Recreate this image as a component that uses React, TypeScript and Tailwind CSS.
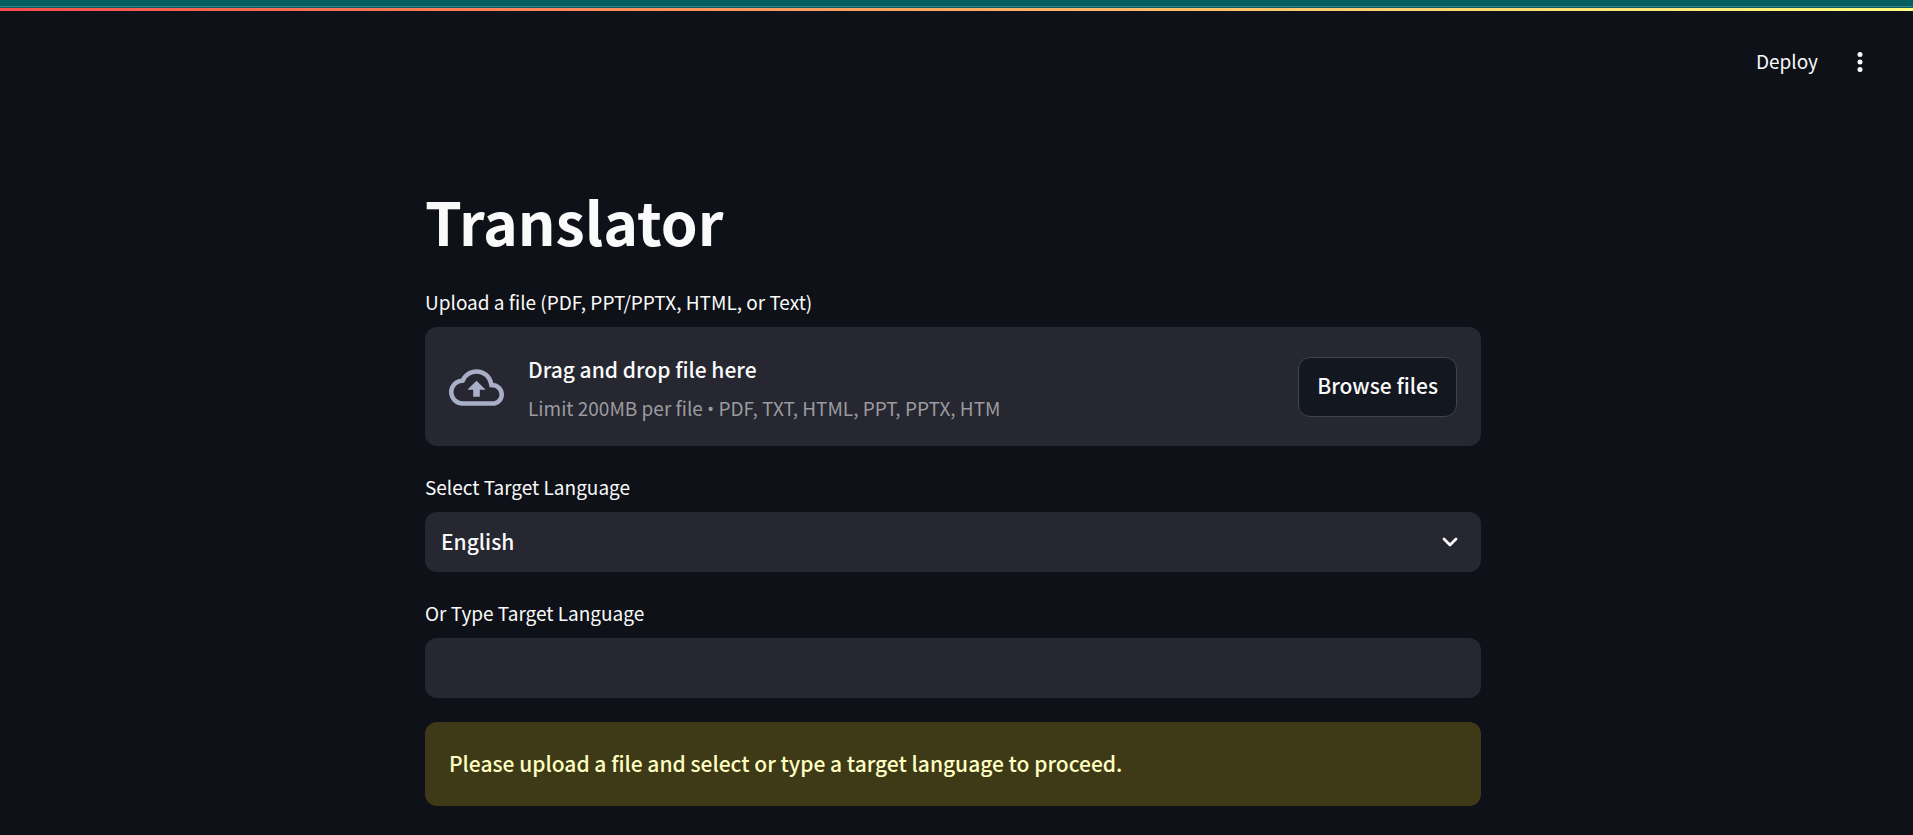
import { useRef, useState } from "react";

const languages = ["English", "Spanish", "French", "German", "Hindi"];

const labelClass = "mb-1.5 flex h-9 items-center pb-0.5 text-[19px] leading-8";
const fieldClass =
  "h-15 w-full appearance-none rounded-xl bg-[#262730] px-4 pb-0.5 text-[21px] leading-9 font-medium outline-none focus-visible:ring-2 focus-visible:ring-[#ff4b4b]";

function Header() {
  return (
    <header>
      <div className="h-2 bg-[#045d61] pt-1.5">
        <div className="h-px bg-[#3c7f83]" />
      </div>
      <div className="h-[3px] bg-linear-to-r from-[#ff4b4b] to-[#fffd80]" />
      <div className="flex h-[102px] items-center justify-end gap-[27px] pr-[38px]">
        <button type="button" className="pb-0.5 text-[19px] leading-9">
          Deploy
        </button>
        <button type="button" aria-label="Main menu">
          <svg viewBox="0 0 24 24" className="size-[30px]" fill="currentColor" aria-hidden="true">
            <circle cx="12" cy="6" r="2" />
            <circle cx="12" cy="12" r="2" />
            <circle cx="12" cy="18" r="2" />
          </svg>
        </button>
      </div>
    </header>
  );
}

function FileUpload() {
  const picker = useRef<HTMLInputElement>(null);
  return (
    <div>
      <label htmlFor="file" className={labelClass}>
        Upload a file (PDF, PPT/PPTX, HTML, or Text)
      </label>
      <section className="flex items-center rounded-xl bg-[#262730] px-6 pt-[23px] pb-[22px]">
        <svg viewBox="0 0 24 24" className="mr-6 size-[55px] shrink-0 text-[#a9afc6]" fill="currentColor" aria-hidden="true">
          <path d="M19.35 10.04A7.49 7.49 0 0012 4C9.11 4 6.6 5.64 5.35 8.04A5.994 5.994 0 000 14c0 3.31 2.69 6 6 6h13c2.76 0 5-2.24 5-5 0-2.64-2.05-4.78-4.65-4.96zM19 18H6c-2.21 0-4-1.79-4-4 0-2.05 1.53-3.76 3.56-3.97l1.07-.11.5-.95A5.469 5.469 0 0112 6c2.62 0 4.88 1.86 5.39 4.43l.3 1.5 1.53.11A2.98 2.98 0 0122 15c0 1.65-1.35 3-3 3zM8 13h2.55v3h2.9v-3H16l-4-4z" />
        </svg>
        <div className="flex grow flex-col gap-[3px]">
          <p className="text-[21px] leading-[39px] font-medium">Drag and drop file here</p>
          <p className="text-[19px] leading-8 text-[#9b9b9f]">
            Limit 200MB per file <span className="font-['Open_Sans',sans-serif] leading-none">•</span> PDF, TXT, HTML, PPT, PPTX, HTM
          </p>
        </div>
        <input
          ref={picker}
          id="file"
          type="file"
          accept=".pdf,.txt,.html,.ppt,.pptx,.htm"
          className="hidden"
        />
        <button
          type="button"
          onClick={() => picker.current?.click()}
          className="h-15 rounded-xl border border-[#41434b] bg-[#131720] px-[18px] pb-1 text-[21px] leading-9 font-medium"
        >
          Browse files
        </button>
      </section>
    </div>
  );
}

export default function App() {
  const [language, setLanguage] = useState("English");
  const [typed, setTyped] = useState("");

  return (
    <div className="min-h-screen bg-[#0e1117] font-['Source_Sans_Pro','Noto_Sans_CJK_SC',sans-serif] text-[#fafafa]">
      <Header />
      <main className="pr-[7px]">
        <div className="mx-auto flex max-w-[1056px] flex-col gap-6 pt-[69px] pb-6">
          <h1 className="pb-0.5 text-[59px] leading-[77px] font-bold">Translator</h1>
          <FileUpload />
          <div>
            <label htmlFor="language" className={labelClass}>
              Select Target Language
            </label>
            <div className="relative">
              <select
                id="language"
                value={language}
                onChange={(event) => setLanguage(event.target.value)}
                className={fieldClass}
              >
                {languages.map((name) => (
                  <option key={name}>{name}</option>
                ))}
              </select>
              <svg
                viewBox="0 0 30 30"
                className="pointer-events-none absolute inset-y-0 right-4 my-auto size-[30px]"
                fill="none"
                stroke="currentColor"
                strokeWidth="2.8"
                strokeLinecap="round"
                strokeLinejoin="round"
                aria-hidden="true"
              >
                <path d="M9 12l6 6 6-6" />
              </svg>
            </div>
          </div>
          <div>
            <label htmlFor="typed-language" className={labelClass}>
              Or Type Target Language
            </label>
            <input
              id="typed-language"
              type="text"
              value={typed}
              onChange={(event) => setTyped(event.target.value)}
              className={fieldClass}
            />
          </div>
          <div
            role="alert"
            className="rounded-xl bg-[#3e3a18] px-6 pt-[23px] pb-[25px] text-[21px] leading-9 font-medium text-[#ffffc2]"
          >
            Please upload a file and select or type a target language to proceed.
          </div>
        </div>
      </main>
    </div>
  );
}
